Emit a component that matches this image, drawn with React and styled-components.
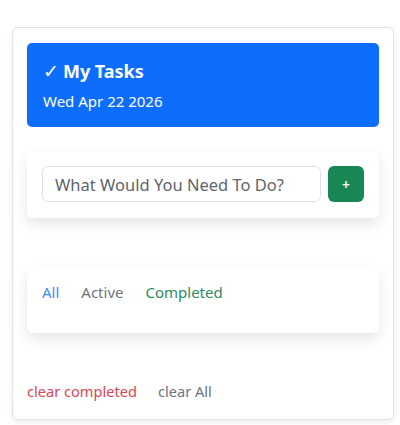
import React from "react";
import styled, { createGlobalStyle } from "styled-components";

const GlobalStyle = createGlobalStyle`
  body {
    margin: 0;
    background: #ffffff;
    font-family: "Noto Sans", "Open Sans", sans-serif;
    color: #212529;
  }
`;

function App() {
  return (
    <>
      <GlobalStyle />
      <Page>
        <Card>
          <Header>
            <Title>
              <Check>✓</Check>
              My Tasks
            </Title>
            <DateText>Wed Apr 22 2026</DateText>
          </Header>

          <Panel>
            <InputRow>
              <TaskInput placeholder="What Would You Need To Do?" />
              <AddButton>+</AddButton>
            </InputRow>
          </Panel>

          <FilterPanel>
            <Filters>
              <FilterLink $color="#3d8bfd">All</FilterLink>
              <FilterLink $color="#6c757d">Active</FilterLink>
              <FilterLink $color="#2f8a5e">Completed</FilterLink>
            </Filters>
          </FilterPanel>

          <Footer>
            <FooterLink $color="#dc4655">clear completed</FooterLink>
            <FooterLink $color="#6c757d">clear All</FooterLink>
          </Footer>
        </Card>
      </Page>
    </>
  );
}

export default App;

const Page = styled.div`
  padding: 27px 6px 7px 12px;
`;

const Card = styled.div`
  background: #fff;
  border: 1px solid #e3e3e3;
  border-radius: 6px;
  box-shadow: 0 2px 6px rgba(0, 0, 0, 0.08);
  padding: 15px 14px 14px 14px;
  height: 362px;
  display: flex;
  flex-direction: column;
`;

const Header = styled.div`
  background: #0d6efd;
  color: #fff;
  border-radius: 5px;
  padding: 14px 16px 14px 16px;
  height: 56px;
`;

const Title = styled.div`
  display: flex;
  align-items: center;
  gap: 4px;
  font-size: 18px;
  font-weight: 700;
  line-height: 28px;
`;

const Check = styled.span`
  font-family: "DejaVu Sans", sans-serif;
  font-weight: 400;
  font-size: 19px;
`;

const DateText = styled.div`
  font-size: 15px;
  line-height: 22px;
  margin-top: 5px;
`;

const Panel = styled.div`
  margin-top: 25px;
  background: #fff;
  border-radius: 6px;
  box-shadow: 0 6px 14px rgba(0, 0, 0, 0.1);
  padding: 14px 15px 16px 15px;
`;

const InputRow = styled.div`
  display: flex;
  gap: 7px;
`;

const TaskInput = styled.input`
  flex: 1;
  height: 36px;
  box-sizing: border-box;
  border: 1px solid #dee2e6;
  border-radius: 6px;
  padding: 0 12px;
  font-family: inherit;
  font-size: 16.5px;
  color: #212529;
  outline: none;
  &::placeholder {
    color: #5f656c;
  }
`;

const AddButton = styled.button`
  width: 36px;
  height: 36px;
  border: none;
  border-radius: 6px;
  background: #198754;
  color: #fff;
  font-family: inherit;
  font-size: 14px;
  font-weight: 600;
  padding: 0;
`;

const FilterPanel = styled(Panel)`
  margin-top: 50px;
  height: 65px;
  box-sizing: border-box;
  padding: 13px 15px;
`;

const Filters = styled.div`
  display: flex;
  gap: 22px;
`;

const FilterLink = styled.span`
  font-size: 15px;
  line-height: 22px;
  color: ${(p) => p.$color};
`;

const Footer = styled.div`
  margin-top: auto;
  display: flex;
  gap: 21px;
  padding-bottom: 3px;
`;

const FooterLink = styled.span`
  font-size: 14.6px;
  line-height: 22px;
  color: ${(p) => p.$color};
`;
